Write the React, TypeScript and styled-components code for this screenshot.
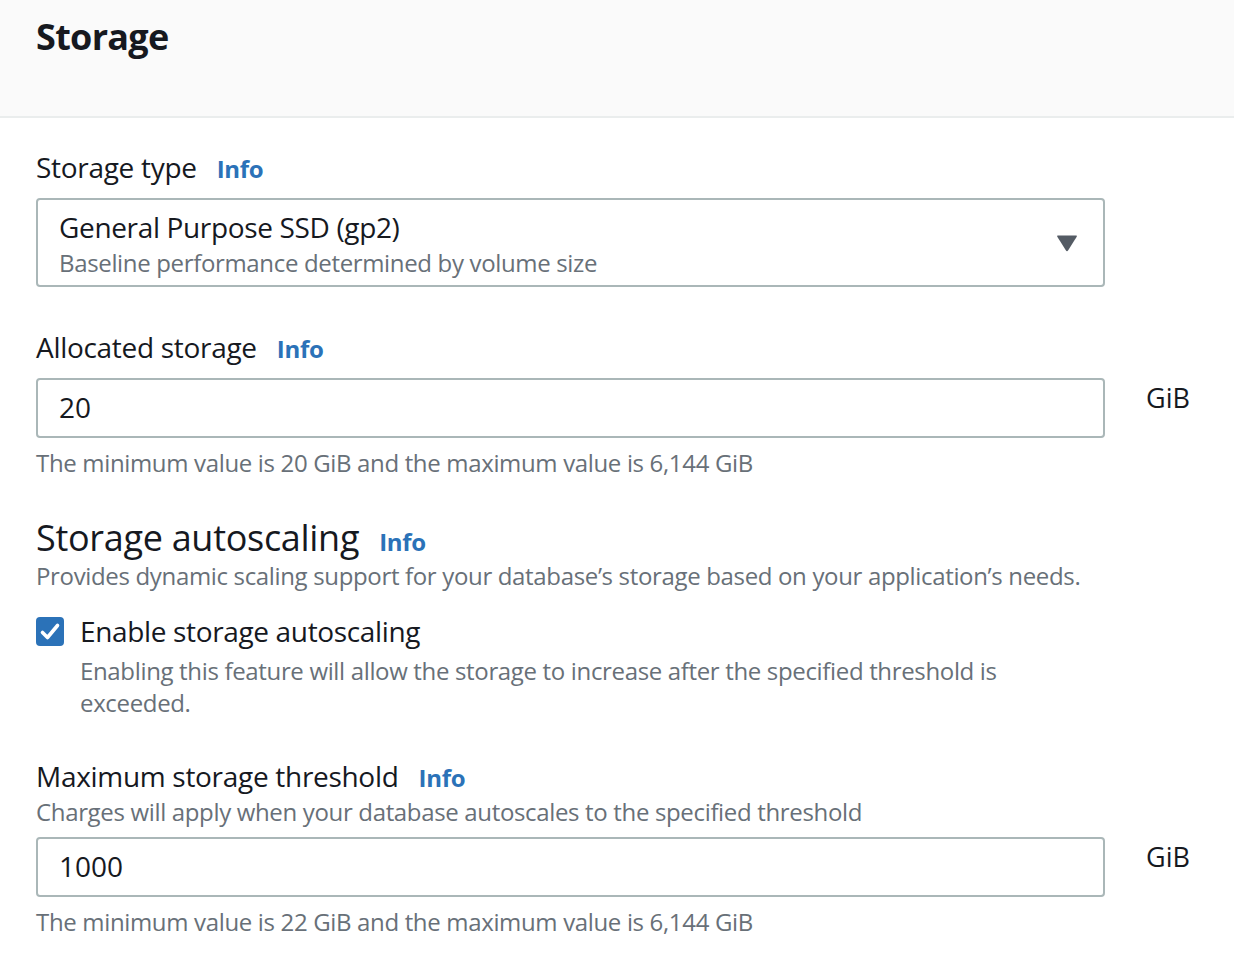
import React from "react";
import styled, { createGlobalStyle } from "styled-components";

const GlobalStyle = createGlobalStyle`
  html, body {
    margin: 0;
    padding: 0;
    background: #ffffff;
  }
  body {
    font-family: "Open Sans", "Noto Sans", Arial, sans-serif;
    color: #16191f;
    -webkit-font-smoothing: antialiased;
  }
  * { box-sizing: border-box; }
`;

const Page = styled.div`
  width: 1234px;
  height: 966px;
  overflow: hidden;
  background: #ffffff;
`;

const Header = styled.header`
  height: 118px;
  background: #fafafa;
  border-bottom: 2px solid #eaeded;
  padding: 13px 36px 0;
`;

const Title = styled.h2`
  margin: 0;
  font-size: 36px;
  line-height: 48px;
  font-weight: 700;
  letter-spacing: -0.7px;
  color: #16191f;
`;

const Body = styled.div`
  display: flex;
  flex-direction: column;
  padding: 29px 36px 0;
`;

const Field = styled.div<{ $gap?: number }>`
  display: flex;
  flex-direction: column;
  margin-top: ${(p) => p.$gap ?? 0}px;
`;

const LabelRow = styled.div`
  display: flex;
  align-items: baseline;
  gap: 20px;
`;

const Label = styled.span`
  font-size: 28px;
  line-height: 40px;
  letter-spacing: -0.3px;
  color: #16191f;
`;

const Heading = styled.h3`
  margin: 0;
  font-size: 36px;
  line-height: 44px;
  font-weight: 400;
  letter-spacing: -0.3px;
  color: #16191f;
`;

const InfoLink = styled.a`
  font-size: 24px;
  font-weight: 700;
  letter-spacing: -0.3px;
  color: #2b72b8;
  text-decoration: none;
`;

const Description = styled.div`
  font-size: 24px;
  line-height: 32px;
  letter-spacing: -0.34px;
  color: #687078;
`;

const Select = styled.div`
  margin-top: 11px;
  width: 1069px;
  height: 89px;
  border: 2px solid #aab7b8;
  border-radius: 4px;
  padding: 7px 20px 0 21px;
  display: flex;
  align-items: flex-start;
  justify-content: space-between;
`;

const SelectText = styled.div`
  display: flex;
  flex-direction: column;
`;

const SelectValue = styled.span`
  font-size: 28px;
  line-height: 40px;
  letter-spacing: -0.35px;
  color: #16191f;
`;

const SelectSub = styled.span`
  font-size: 24px;
  line-height: 32px;
  letter-spacing: -0.34px;
  color: #687078;
`;

const Caret = styled.svg`
  width: 22px;
  height: 18px;
  margin-top: 27px;
  margin-right: 5px;
`;

const InputRow = styled.div<{ $top: number }>`
  display: flex;
  align-items: flex-start;
  gap: 41px;
  margin-top: ${(p) => p.$top}px;
`;

const InputBox = styled.div`
  width: 1069px;
  height: 60px;
  border: 2px solid #aab7b8;
  border-radius: 4px;
  padding: 0 21px 2px;
  display: flex;
  align-items: center;
  font-size: 28px;
  line-height: 40px;
  color: #16191f;
`;

const Unit = styled.span`
  font-size: 27px;
  line-height: 40px;
  color: #16191f;
`;

const Hint = styled.div`
  margin-top: 9px;
  font-size: 24px;
  line-height: 32px;
  letter-spacing: -0.34px;
  color: #687078;
`;

const CheckRow = styled.div`
  display: flex;
  gap: 16px;
  margin-top: 19px;
`;

const CheckBox = styled.div`
  flex: none;
  width: 28px;
  height: 29px;
  margin-top: 6px;
  border-radius: 4px;
  background: #2b72b8;
  display: flex;
  align-items: center;
  justify-content: center;
`;

const CheckText = styled.div`
  display: flex;
  flex-direction: column;
`;

const CheckLabel = styled.span`
  font-size: 28px;
  line-height: 40px;
  letter-spacing: -0.35px;
  color: #16191f;
`;

const CheckDesc = styled.div`
  margin-top: 4px;
  font-size: 24px;
  line-height: 32px;
  letter-spacing: -0.34px;
  color: #687078;
`;

export default function App() {
  return (
    <Page>
      <GlobalStyle />
      <Header>
        <Title>Storage</Title>
      </Header>
      <Body>
        <Field>
          <LabelRow>
            <Label>Storage type</Label>
            <InfoLink>Info</InfoLink>
          </LabelRow>
          <Select>
            <SelectText>
              <SelectValue>General Purpose SSD (gp2)</SelectValue>
              <SelectSub>Baseline performance determined by volume size</SelectSub>
            </SelectText>
            <Caret viewBox="0 0 22 18">
              <path
                d="M2 1.5 H20 Q21.5 1.5 20.7 2.8 L12.2 16.3 Q11 18 9.8 16.3 L1.3 2.8 Q0.5 1.5 2 1.5 Z"
                fill="#545b64"
              />
            </Caret>
          </Select>
        </Field>

        <Field $gap={40}>
          <LabelRow>
            <Label>Allocated storage</Label>
            <InfoLink>Info</InfoLink>
          </LabelRow>
          <InputRow $top={11}>
            <InputBox>20</InputBox>
            <Unit>GiB</Unit>
          </InputRow>
          <Hint>The minimum value is 20 GiB and the maximum value is 6,144 GiB</Hint>
        </Field>

        <Field $gap={37}>
          <LabelRow>
            <Heading>Storage autoscaling</Heading>
            <InfoLink>Info</InfoLink>
          </LabelRow>
          <Description>
            Provides dynamic scaling support for your database’s storage based on your application’s needs.
          </Description>
          <CheckRow>
            <CheckBox>
              <svg width="22" height="22" viewBox="0 0 22 22">
                <path
                  d="M3.5 11.5 L8.5 16.5 L18.5 4.5"
                  fill="none"
                  stroke="#ffffff"
                  strokeWidth="3.6"
                  strokeLinecap="round"
                  strokeLinejoin="round"
                />
              </svg>
            </CheckBox>
            <CheckText>
              <CheckLabel>Enable storage autoscaling</CheckLabel>
              <CheckDesc>
                Enabling this feature will allow the storage to increase after the specified threshold is
                <br />
                exceeded.
              </CheckDesc>
            </CheckText>
          </CheckRow>
        </Field>

        <Field $gap={37}>
          <LabelRow>
            <Label>Maximum storage threshold</Label>
            <InfoLink>Info</InfoLink>
          </LabelRow>
          <Description>Charges will apply when your database autoscales to the specified threshold</Description>
          <InputRow $top={9}>
            <InputBox>1000</InputBox>
            <Unit>GiB</Unit>
          </InputRow>
          <Hint>The minimum value is 22 GiB and the maximum value is 6,144 GiB</Hint>
        </Field>
      </Body>
    </Page>
  );
}
